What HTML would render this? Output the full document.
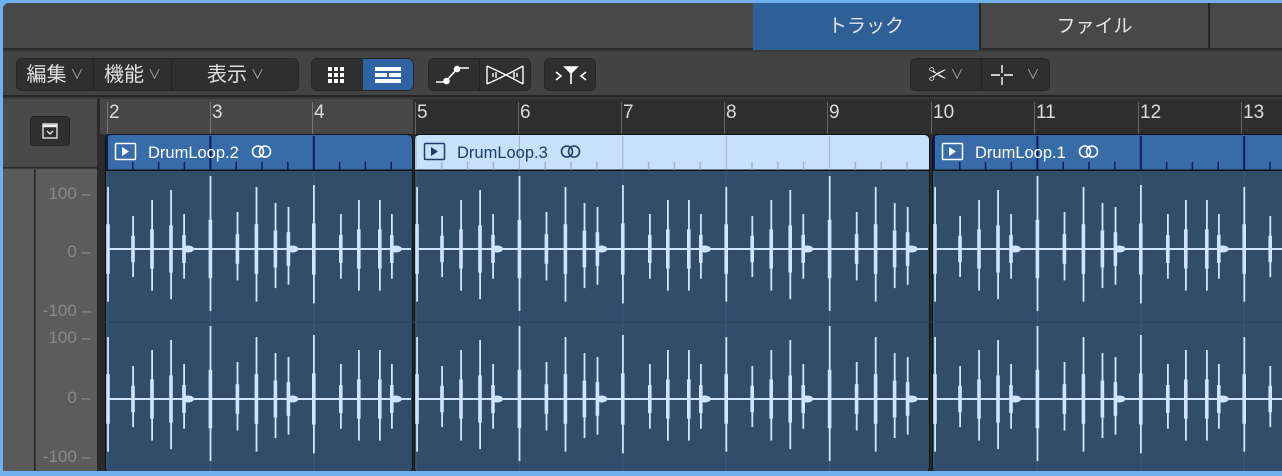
<!DOCTYPE html>
<html><head><meta charset="utf-8"><style>
*{margin:0;padding:0;box-sizing:border-box}
body{width:1282px;height:476px;overflow:hidden;background:#6fb0ef;font-family:"Liberation Sans","Noto Sans CJK JP",sans-serif;position:relative}
.a{position:absolute}
#win{left:3px;top:3px;width:1279px;height:468px;background:#3a3a3a;border-top-left-radius:6px;overflow:hidden}
.tab{top:0;height:47px;color:#e6e6e6;font-size:19px;text-align:center;line-height:47px}
.btn{height:33px;background:#2f2f2f;border:1px solid #262626;border-radius:6px;color:#e0e0e0;font-size:20px}
.seg{position:absolute;top:0;height:31px;line-height:31px;text-align:center;white-space:nowrap}
.num{color:#dcdcdc;font-size:19px;top:3px}
.tick{width:1px;background:#777}
.lbl{color:#8a8a8a;font-size:17px;text-align:right;width:70px;left:18px;white-space:nowrap}
.chev{font-size:13px;color:#aaa;vertical-align:2px;margin-left:4px}
</style></head><body>
<div id="win" class="a">
 <div class="a" style="left:0;top:0;width:1279px;height:47px;background:#484848;border-bottom:2px solid #2a2a2a"></div>
 <div class="a tab" style="left:750px;width:226px;background:#2e5f96">トラック</div>
 <div class="a" style="left:976px;top:0;width:2px;height:47px;background:#262626"></div>
 <div class="a tab" style="left:978px;width:227px">ファイル</div>
 <div class="a" style="left:1205px;top:0;width:2px;height:47px;background:#262626"></div>
 <div class="a" style="left:0;top:49px;width:1279px;height:45px;background:#434343;border-bottom:2px solid #262626"></div>
 <div class="a btn" style="left:13px;top:55px;width:283px">
  <div class="seg" style="left:0;width:76px">編集<span class="chev">∨</span></div>
  <div class="a" style="left:76px;top:0;width:1px;height:31px;background:#222"></div>
  <div class="seg" style="left:77px;width:77px">機能<span class="chev">∨</span></div>
  <div class="a" style="left:154px;top:0;width:1px;height:31px;background:#222"></div>
  <div class="seg" style="left:155px;width:127px">表示<span class="chev">∨</span></div>
 </div>
 <div class="a btn" style="left:308px;top:55px;width:103px;overflow:hidden">
  <svg class="a" style="left:16px;top:8px" width="20" height="16"><g fill="#fff"><rect x="0" y="0" width="4" height="4"/><rect x="6" y="0" width="4" height="4"/><rect x="12" y="0" width="4" height="4"/><rect x="0" y="6" width="4" height="4"/><rect x="6" y="6" width="4" height="4"/><rect x="12" y="6" width="4" height="4"/><rect x="0" y="12" width="4" height="4"/><rect x="6" y="12" width="4" height="4"/><rect x="12" y="12" width="4" height="4"/></g></svg>
  <div class="a" style="left:51px;top:0;width:51px;height:31px;background:#2e64a3"></div>
  <svg class="a" style="left:63px;top:8px" width="26" height="16"><g fill="#fff"><rect x="0" y="0" width="26" height="4"/><rect x="0" y="6" width="12" height="4"/><rect x="14" y="6" width="12" height="4"/><rect x="0" y="12" width="26" height="4"/></g></svg>
 </div>
 <div class="a btn" style="left:425px;top:55px;width:103px">
  <svg class="a" style="left:6px;top:5px" width="36" height="22" fill="none" stroke="#fff" stroke-width="1.6"><path d="M1 18H10M13 15L21 6M24 4H34"/><circle cx="11.5" cy="17" r="2.5" fill="#fff"/><circle cx="22" cy="5" r="2.5" fill="#fff"/></svg>
  <div class="a" style="left:50px;top:0;width:1px;height:31px;background:#222"></div>
  <svg class="a" style="left:57px;top:5px" width="38" height="22" fill="none" stroke="#fff" stroke-width="1.4"><path d="M1 2V20M37 2V20M1 2Q19 10 37 20M1 20Q19 12 37 2"/><path d="M7 9V13M10 8V14M28 8V14M31 9V13" /></svg>
 </div>
 <div class="a btn" style="left:541px;top:55px;width:52px">
  <svg class="a" style="left:9px;top:5px" width="34" height="22" fill="none" stroke="#fff" stroke-width="1.6"><path d="M2 8L7 12L2 16M32 8L27 12L32 16M17 8V20"/><path d="M11 3H23L17 9Z" fill="#fff"/></svg>
 </div>
 <div class="a btn" style="left:907px;top:55px;width:140px">
  <div class="seg" style="left:0;width:70px"><span style="font-size:18px;color:#fff">✂</span><span class="chev">∨</span></div>
  <div class="a" style="left:70px;top:0;width:1px;height:31px;background:#222"></div>
  <svg class="a" style="left:79px;top:5px" width="24" height="22" stroke="#fff" stroke-width="1.4"><path d="M1 11H10M14 11H23M12 1V9M12 13V21"/></svg>
  <div class="seg" style="left:112px;width:20px;font-size:13px;color:#aaa">∨</div>
 </div>
 <div class="a" style="left:0;top:96px;width:97px;height:69px;background:#4a4a4a;border-bottom:1px solid #2a2a2a"></div>
 <div class="a" style="left:27px;top:113px;width:40px;height:30px;background:#2f2f2f;border:1px solid #252525;border-radius:4px"></div>
 <svg class="a" style="left:39px;top:120px" width="16" height="16" fill="none" stroke="#eee" stroke-width="1.3"><rect x="1" y="1" width="14" height="14"/><path d="M1 3H15" stroke-width="2.5"/><path d="M5 8L8 11L11 8"/></svg>
 <div class="a" style="left:94px;top:96px;width:316px;height:35px;background:#474747"></div>
 <div class="a" style="left:410px;top:96px;width:869px;height:35px;background:#2e2e2e"></div>
 <div class="a" style="left:94px;top:96px;width:3px;height:375px;background:#2a2a2a"></div>
 <div id="ruler"></div>
 <div class="a" style="left:0;top:166px;width:32px;height:305px;background:#595959;border-right:1px solid #2a2a2a"></div>
 <div class="a" style="left:33px;top:166px;width:61px;height:305px;background:#5c5c5c"></div>
 <div class="a" style="left:97px;top:131px;width:1182px;height:340px;background:#2b2b2b"></div>
 <div id="regs"></div>
 <div class="a lbl" style="top:181px">100 –</div>
 <div class="a lbl" style="top:239px">0 –</div>
 <div class="a lbl" style="top:298px">-100 –</div>
 <div class="a lbl" style="top:325px">100 –</div>
 <div class="a lbl" style="top:385px">0 –</div>
 <div class="a lbl" style="top:444px">-100 –</div>
</div>
<script>
var bars=[107,210,312,415,518,621,724,827,931,1034,1138,1241];
var r='';
bars.forEach(function(x,i){r+='<div class="a tick" style="left:'+(x-3)+'px;top:99px;height:32px;background:'+(x<413?'#777':'#666')+'"></div><div class="a num" style="left:'+(x-1)+'px;top:99px">'+(i+2)+'</div>';});
document.getElementById('ruler').innerHTML=r;
var pats=[[[0,62,0],[26,33,0],[45,49,0],[64,59,0],[77,35,1]],[[0,73,0],[27,37,0],[46,62,0],[65,46,0],[78,42,1]],[[0,64,0],[27,35,0],[45,49,0],[66,49,0],[78,35,1]]];
function region(x0,x1,name,light,nb){
 var w=x1-x0;
 var svg='<svg class="a" style="left:'+x0+'px;top:131px" width="'+w+'" height="340">';
 svg+='<rect x="0.5" y="0.5" width="'+(w-1)+'" height="338" rx="5" fill="#324d6c" stroke="#111"/>';
 svg+='<path d="M0.5 36V6Q0.5 0.5 6 0.5H'+(w-6)+'Q'+(w-0.5)+' 0.5 '+(w-0.5)+' 6V36Z" fill="'+(light?'#c8e1fb':'#376ca8')+'" stroke="#111"/>';
 svg+='<line x1="0" y1="36.5" x2="'+w+'" y2="36.5" stroke="#111"/>';
 svg+='<line x1="0" y1="188" x2="'+w+'" y2="188" stroke="#2c445f"/>';
 var tc=light?'#9fb4ca':'#0a1d5a';
 for(var b=0;b<nb;b++){var bx=2+b*103.4;
  svg+='<line x1="'+bx+'" y1="2" x2="'+bx+'" y2="36" stroke="'+(light?'#9fb0c2':'#0a1d5a')+'" stroke-width="'+(light?1:2)+'"/>';
  svg+='<line x1="'+bx+'" y1="37" x2="'+bx+'" y2="338" stroke="#3e5a7a"/>';
  for(var k=1;k<4;k++){var tx=bx+k*25.8;svg+='<line x1="'+tx+'" y1="28" x2="'+tx+'" y2="36" stroke="'+tc+'" stroke-width="1.5"/>';}
  var p=pats[b%3];
  [115,265].forEach(function(cy){p.forEach(function(s){var sx=bx+s[0]+(b==0&&s[0]==0?1:0),a=s[1];
   svg+='<rect x="'+(sx-0.8)+'" y="'+(cy-a)+'" width="1.8" height="'+(a*1.85)+'" fill="#cfe5ff"/>';
   svg+='<rect x="'+(sx-1.8)+'" y="'+(cy-a*0.4)+'" width="3.6" height="'+(a*0.8)+'" fill="#cfe5ff"/>';
   if(s[2])svg+='<ellipse cx="'+(sx+4)+'" cy="'+cy+'" rx="6" ry="3.5" fill="#cfe5ff"/>';});});
 }
 [115,265].forEach(function(cy){svg+='<rect x="2" y="'+(cy-1)+'" width="'+(w-4)+'" height="2" fill="#cfe5ff"/>';});
 var ic=light?'#1b3d66':'#ffffff';
 svg+='<rect x="10.5" y="9.5" width="20" height="16" rx="1" fill="none" stroke="'+ic+'" stroke-width="1.5"/><path d="M17 13L24 17.5L17 22Z" fill="'+ic+'"/>';
 svg+='<text x="43" y="24" font-family="Liberation Sans" font-size="16.5" fill="'+ic+'">'+name+'</text>';
 var cx=43+name.length*9.6+14;
 svg+='<circle cx="'+cx+'" cy="17.5" r="5.5" fill="none" stroke="'+ic+'" stroke-width="1.6"/><circle cx="'+(cx+7)+'" cy="17.5" r="5.5" fill="none" stroke="'+ic+'" stroke-width="1.6"/>';
 svg+='</svg>';return svg;}
document.getElementById('regs').innerHTML=region(102,410,'DrumLoop.2',false,3)+region(411,927,'DrumLoop.3',true,5)+region(929,1290,'DrumLoop.1',false,4);
</script>
</body></html>
